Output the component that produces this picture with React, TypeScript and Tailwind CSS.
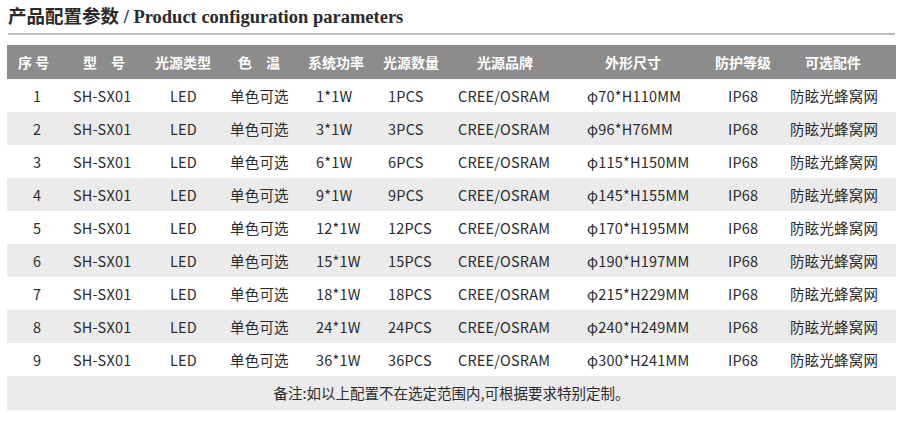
import React from 'react';

const cols = [
  { w: 'w-[56px]', hp: 'pl-[11px]', bp: 'pl-[26px]' },
  { w: 'w-[77px]', hp: 'pl-[20px]', bp: 'pl-[10px]' },
  { w: 'w-[86px]', hp: 'pl-[15px]', bp: 'pl-[30px]' },
  { w: 'w-[66px]', hp: 'pl-[12px]', bp: 'pl-[4px]' },
  { w: 'w-[84px]', hp: 'pl-[16px]', bp: 'pl-[24px]' },
  { w: 'w-[70px]', hp: 'pl-[7px]', bp: 'pl-[12px]' },
  { w: 'w-[114px]', hp: 'pl-[31px]', bp: 'pl-[12px]' },
  { w: 'w-[145px]', hp: 'pl-[45px]', bp: 'pl-[27px]' },
  { w: 'w-[76px]', hp: 'pl-[10px]', bp: 'pl-[23px]' },
  { w: 'w-[115px]', hp: 'pl-[24px]', bp: 'pl-[9px]' },
];

const headers = ['序 号', '型　号', '光源类型', '色　温', '系统功率', '光源数量', '光源品牌', '外形尺寸', '防护等级', '可选配件'];

const specs = [
  [1, 1, '70', '110'],
  [2, 3, '96', '76'],
  [3, 6, '115', '150'],
  [4, 9, '145', '155'],
  [5, 12, '170', '195'],
  [6, 15, '190', '197'],
  [7, 18, '215', '229'],
  [8, 24, '240', '249'],
  [9, 36, '300', '241'],
];

const rows = specs.map(([n, count, d, h]) => [
  String(n),
  'SH-SX01',
  'LED',
  '单色可选',
  `${count}*1W`,
  `${count}PCS`,
  'CREE/OSRAM',
  `φ${d}*H${h}MM`,
  'IP68',
  '防眩光蜂窝网',
]);

export default function App() {
  return (
    <div className="w-[900px] h-[421px] bg-white overflow-hidden" style={{ fontFamily: '"Noto Sans CJK SC", "Noto Sans", sans-serif' }}>
      <div className="pl-[8px] pt-[4px] h-[33px]">
        <h1
          className="text-[18.5px] leading-[26px] font-bold text-[#2a2a2a]"
          style={{ fontFamily: '"Liberation Serif", "Noto Sans CJK SC", serif' }}
        >
          产品配置参数 / Product configuration parameters
        </h1>
      </div>
      <div className="ml-[8px] w-[887px] h-[2px] bg-[#bdbdbd]" />
      <div className="ml-[7px] mt-[10px] w-[889px]">
        <div className="flex h-[34px] items-center bg-[#8c8c8c] text-white text-[14px] font-bold">
          {headers.map((t, i) => (
            <div key={i} className={`${cols[i].w} ${cols[i].hp} whitespace-pre`}>
              {t}
            </div>
          ))}
        </div>
        {rows.map((r, ri) => (
          <div
            key={ri}
            className={`flex h-[33px] items-center text-[14.5px] tracking-[0.2px] text-[#2b2b2b] ${ri % 2 === 1 ? 'bg-[#ebebeb]' : 'bg-white'}`}
          >
            {r.map((c, ci) => (
              <div key={ci} className={`${cols[ci].w} ${cols[ci].bp} whitespace-nowrap`}>
                {c}
              </div>
            ))}
          </div>
        ))}
        <div className="flex h-[34px] items-center justify-center bg-[#ebebeb] text-[14.5px] text-[#2b2b2b]">
          备注:如以上配置不在选定范围内,可根据要求特别定制。
        </div>
      </div>
    </div>
  );
}
